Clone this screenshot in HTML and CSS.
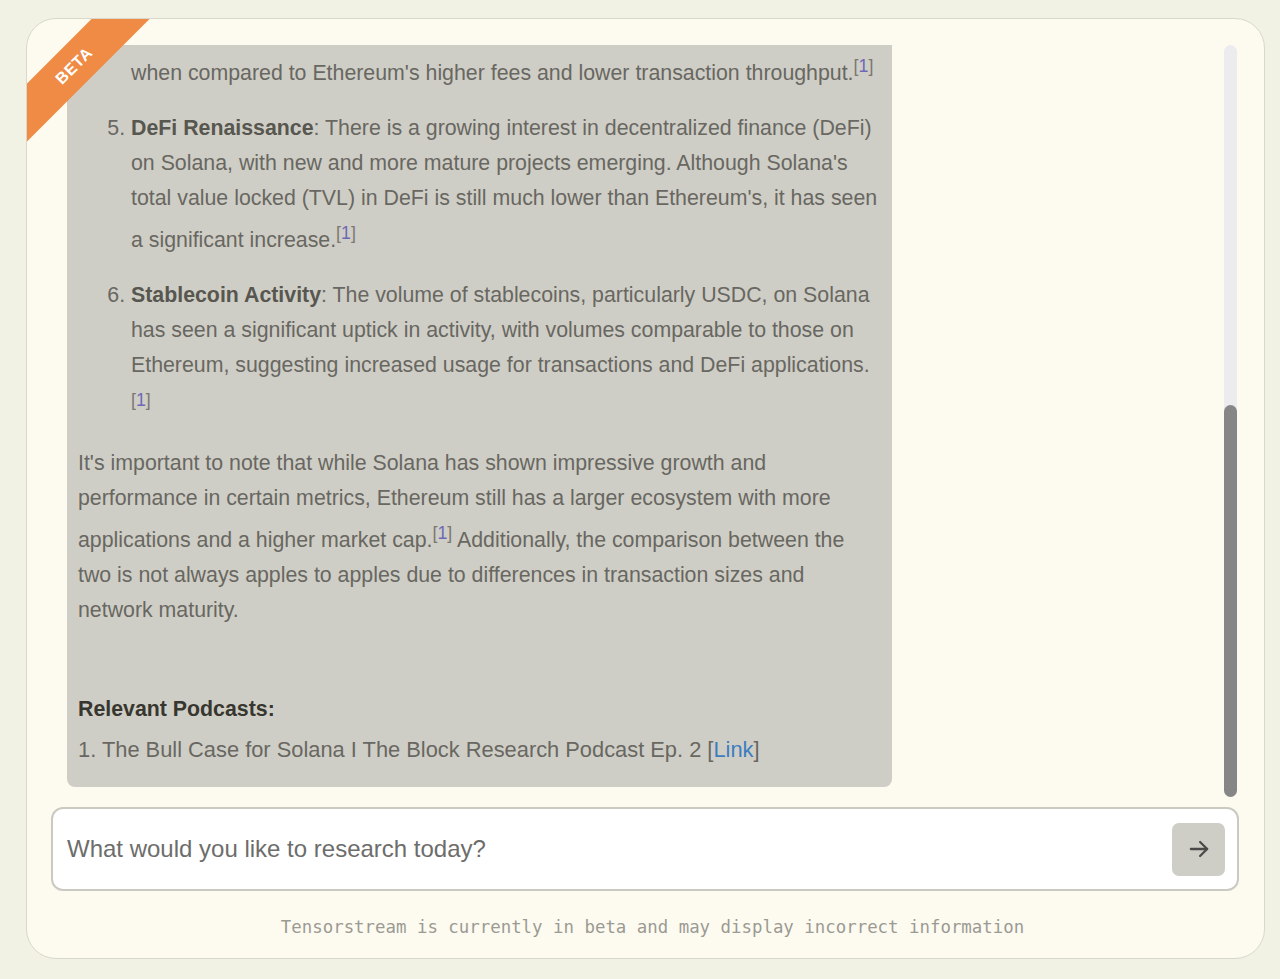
FILE: index.html
```html
<!DOCTYPE html>
<html lang="en">
<head>
<meta charset="utf-8">
<title>Tensorstream</title>
<link rel="stylesheet" href="styles.css">
</head>
<body>
<div class="card">
  <div class="ribbon">BETA</div>
  <div class="chat">
    <div class="messages">
      <div class="bubble">
        <ol class="list list-cont">
          <li>when compared to Ethereum's higher fees and lower transaction throughput.<sup>[<a href="#">1</a>]</sup></li>
        </ol>
        <ol class="list" start="5">
          <li><strong>DeFi Renaissance</strong>: There is a growing interest in decentralized finance (DeFi) on Solana, with new and more mature projects emerging. Although Solana's total value locked (TVL) in DeFi is still much lower than Ethereum's, it has seen a significant increase.<sup>[<a href="#">1</a>]</sup></li>
          <li><strong>Stablecoin Activity</strong>: The volume of stablecoins, particularly USDC, on Solana has seen a significant uptick in activity, with volumes comparable to those on Ethereum, suggesting increased usage for transactions and DeFi applications. <sup>[<a href="#">1</a>]</sup></li>
        </ol>
        <p class="para">It's important to note that while Solana has shown impressive growth and performance in certain metrics, Ethereum still has a larger ecosystem with more applications and a higher market cap.<sup>[<a href="#">1</a>]</sup> Additionally, the comparison between the two is not always apples to apples due to differences in transaction sizes and network maturity.</p>
        <p class="podcasts-title">Relevant Podcasts:</p>
        <p class="podcast">1. The Bull Case for Solana I The Block Research Podcast Ep. 2 [<a class="link" href="#">Link</a>]</p>
      </div>
    </div>
    <div class="scrollbar"><div class="thumb"></div></div>
  </div>
  <form class="composer">
    <input class="prompt" type="text" placeholder="What would you like to research today?">
    <button class="send" type="button" aria-label="Send">
      <svg width="26" height="26" viewBox="0 0 24 24" fill="none" stroke="#4a4a48" stroke-width="2.1" stroke-linecap="round" stroke-linejoin="round"><path d="M4.5 12h15"/><path d="M13 5.5l6.5 6.5-6.5 6.5"/></svg>
    </button>
  </form>
  <p class="disclaimer">Tensorstream is currently in beta and may display incorrect information</p>
</div>
</body>
</html>
```
FILE: styles.css
```css
* { box-sizing: border-box; }

html, body {
  margin: 0;
  height: 100%;
}

body {
  background: #f2f2e4;
  padding: 18px 15px 20px 26px;
  font-family: "Liberation Sans", Arial, Helvetica, sans-serif;
}

.card {
  position: relative;
  height: 941px;
  background: #fdfbf0;
  border: 1px solid #d8d7cb;
  border-radius: 30px;
  overflow: hidden;
  padding: 26px 25px 0 24px;
  display: flex;
  flex-direction: column;
}

.ribbon {
  position: absolute;
  left: -63.5px;
  top: 26px;
  width: 220px;
  height: 41px;
  background: #ef8b44;
  color: #fff;
  font-weight: bold;
  font-size: 16px;
  letter-spacing: 0.6px;
  display: flex;
  align-items: center;
  justify-content: center;
  transform: rotate(-45deg);
  z-index: 5;
}

.chat {
  height: 752px;
  display: flex;
  flex-shrink: 0;
}

.messages {
  flex: 1;
  overflow: hidden;
  padding-left: 16px;
}

.scrollbar {
  width: 13px;
  margin-right: 2px;
  background: #ececee;
  border-radius: 7px;
  display: flex;
  flex-direction: column;
  justify-content: flex-end;
}

.thumb {
  height: 392px;
  background: #868686;
  border-radius: 7px;
}

.bubble {
  width: 825px;
  background: #cfcec6;
  border-radius: 0 0 8px 8px;
  padding: 4px 11px 20px 11px;
  color: #686761;
  font-size: 21.33px;
  line-height: 35px;
}

.list {
  margin: 0;
  padding-left: 53px;
}

.list li {
  margin-top: 20px;
}

.list-cont {
  list-style: none;
}

.list-cont li:first-child {
  margin-top: 0;
}

.list strong {
  color: #57564f;
}

sup {
  font-size: smaller;
  vertical-align: super;
  color: #7a7972;
}

sup a {
  color: #6d69b6;
  text-decoration: none;
}

.para {
  margin: 21px 0 0 0;
}

.podcasts-title {
  margin: 64px 0 0 0;
  font-weight: bold;
  color: #37362f;
}

.podcast {
  margin: 5px 0 0 0;
  font-size: 21.85px;
}

.link {
  color: #3c7dbf;
  text-decoration: none;
}

.composer {
  margin: 10px 0 0 0;
  height: 84px;
  flex-shrink: 0;
  background: #ffffff;
  border: 2px solid #cbcac1;
  border-radius: 12px;
  display: flex;
  align-items: center;
  padding: 0 12px 0 14px;
}

.prompt {
  flex: 1;
  border: none;
  outline: none;
  background: transparent;
  padding: 0;
  font-family: "Liberation Sans", Arial, Helvetica, sans-serif;
  font-size: 24px;
  color: #555;
}

.prompt::placeholder {
  color: #6d6d6b;
}

.send {
  width: 53px;
  height: 53px;
  border: none;
  border-radius: 7px;
  background: #cfcec6;
  display: flex;
  align-items: center;
  justify-content: center;
  padding: 0;
}

.disclaimer {
  margin: 24px 0 0 0;
  padding-left: 15px;
  text-align: center;
  font-family: "DejaVu Sans Mono", "Liberation Mono", monospace;
  font-size: 17.4px;
  line-height: 24px;
  color: #9b9a93;
}
```
